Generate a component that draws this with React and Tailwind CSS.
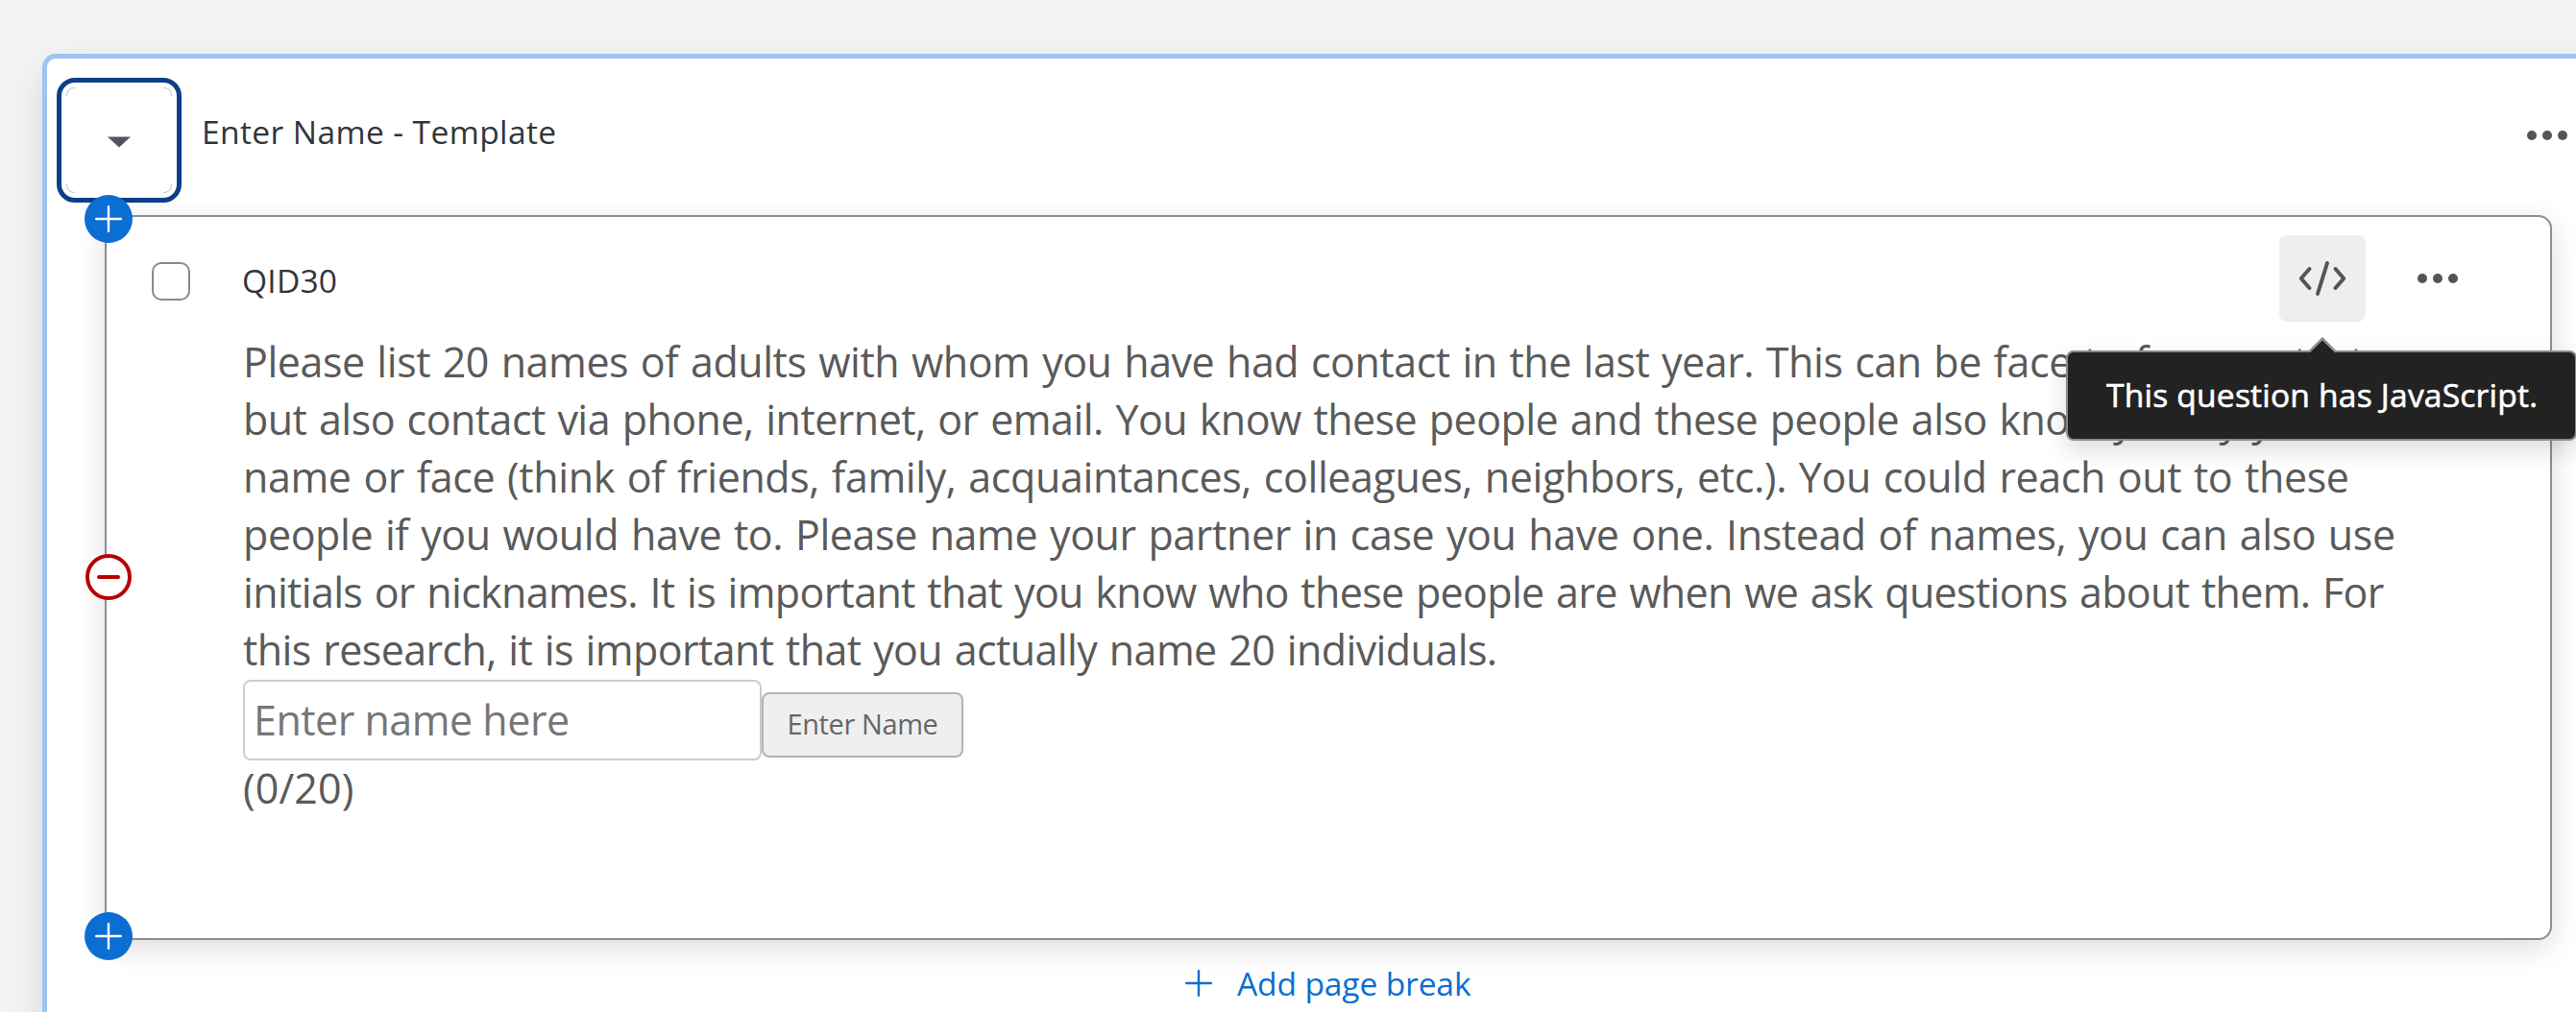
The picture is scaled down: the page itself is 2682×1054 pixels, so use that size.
const paragraph = [
  { text: "Please list 20 names of adults with whom you have had contact in the last year. This can be face to face contact", spacing: "tracking-[-0.46px]" },
  { text: "but also contact via phone, internet, or email. You know these people and these people also know you by your", spacing: "tracking-[-0.54px]" },
  { text: "name or face (think of friends, family, acquaintances, colleagues, neighbors, etc.). You could reach out to these", spacing: "tracking-[-0.4px]" },
  { text: "people if you would have to. Please name your partner in case you have one. Instead of names, you can also use", spacing: "tracking-[-0.41px]" },
  { text: "initials or nicknames. It is important that you know who these people are when we ask questions about them. For", spacing: "tracking-[-0.67px]" },
  { text: "this research, it is important that you actually name 20 individuals.", spacing: "tracking-[-0.6px]" },
];

function Dots() {
  return (
    <span className="flex gap-[6px]">
      <span className="size-[10px] rounded-full bg-[#50555b]" />
      <span className="size-[10px] rounded-full bg-[#50555b]" />
      <span className="size-[10px] rounded-full bg-[#50555b]" />
    </span>
  );
}

function PlusIcon() {
  return (
    <svg width="28" height="28" viewBox="0 0 28 28" fill="none" stroke="currentColor" strokeWidth="2.4" strokeLinecap="round">
      <path d="M14 1.2v25.6M1.2 14h25.6" />
    </svg>
  );
}

function AddButton({ className }) {
  return (
    <button className={`absolute left-[-23px] flex size-[50px] items-center justify-center rounded-full bg-[#0b6ed3] text-white ${className}`}>
      <PlusIcon />
    </button>
  );
}

function Tooltip() {
  return (
    <div className="absolute left-[-222px] top-[120px] z-10 flex h-[94px] w-[532px] items-center rounded-lg border-2 border-[#8a8a8a] bg-[#222] pl-[40px] shadow-[0_10px_24px_rgba(0,0,0,0.14)]">
      <svg className="absolute left-[250px] top-[-16px]" width="30" height="18" viewBox="0 0 30 18">
        <path d="M1 17 15 3 29 17V18H1Z" fill="#222" />
        <path d="M1 15.5 15 1.5 29 15.5" fill="none" stroke="#8a8a8a" strokeWidth="2.2" />
      </svg>
      <span className="mt-[-2px] whitespace-nowrap text-[33.6px] leading-[46px] tracking-[0.2px] text-white [-webkit-text-stroke:0.6px_white]">This question has JavaScript.</span>
    </div>
  );
}

function Question() {
  return (
    <section className="relative ml-[60px] h-[755px] w-[2548px] rounded-[14px] border-2 border-[#87909c] bg-white shadow-[0_8px_30px_rgba(0,0,0,0.14)]">
      <AddButton className="top-[-23px]" />
      <button className="absolute left-[-22px] top-[351px] flex size-[48px] items-center justify-center rounded-full border-4 border-[#b80000] bg-white">
        <span className="h-1 w-6 rounded-full bg-[#b80000]" />
      </button>
      <AddButton className="top-[724px]" />

      <div className="flex h-[120px] pl-[47px] pt-[19px]">
        <span className="mt-[28px] size-[40px] rounded-[10px] border-2 border-[#8a8a8a]" />
        <span className="ml-[54px] mt-[24px] text-[33.6px] leading-[46px] tracking-[0.2px] text-[#32363a]">QID30</span>
        <div className="ml-auto mr-[96px] flex">
          <div className="relative mr-[54px] flex size-[90px] items-center justify-center rounded-lg bg-[#eee]">
            <svg width="50" height="38" viewBox="0 0 50 38" fill="none" stroke="#50555b" strokeWidth="4" strokeLinecap="round" strokeLinejoin="round">
              <path d="M11.5 9 2.8 19l8.7 10M38.5 9l8.7 10-8.7 10M30 3l-10 32" />
            </svg>
            <Tooltip />
          </div>
          <div className="flex h-[90px] items-center">
            <Dots />
          </div>
        </div>
      </div>

      <div className="pl-[142px] pt-px text-[43px] leading-[60px] text-[#5a5a5a]">
        <p>
          {paragraph.map(({ text, spacing }) => (
            <span key={text} className={`block whitespace-nowrap [word-spacing:2px] ${spacing}`}>{text}</span>
          ))}
        </p>
        <div className="mt-px flex items-start">
          <input
            className="h-[84px] w-[540px] rounded-lg border-2 border-[#ccc] bg-white pb-[2px] pl-[9px] tracking-[-0.5px] placeholder:text-[#767676]"
            placeholder="Enter name here"
          />
          <button className="mt-[13px] h-[68px] w-[210px] rounded-lg border-2 border-[#b3b3b3] bg-[#efefef] pb-[2px] text-[29px] leading-[40px] tracking-[-0.4px] text-[#666]">
            Enter Name
          </button>
        </div>
        <p className="mt-[-1px] tracking-[0.1px]">(0/20)</p>
      </div>
    </section>
  );
}

export default function App() {
  return (
    <main className="h-[1054px] w-full overflow-hidden bg-[#f4f4f4] pl-[44px] pt-[56px] font-['Open_Sans',sans-serif]">
      <div className="h-[1100px] w-[2700px] rounded-tl-[14px] border-[5px] border-[#9dc5ef] bg-white shadow-[0_16px_40px_rgba(0,0,0,0.12)]">
        <header className="flex h-[163px] w-[2633px] items-start pl-[10px] pr-[9px] pt-[20px]">
          <button className="flex size-[130px] items-center justify-center rounded-[19px] border-[5px] border-[#0b3f87]">
            <svg width="120" height="120" viewBox="0 0 120 120" fill="none">
              <path d="M48 56.5h24L60 67.5Z" fill="#50555b" />
              <path d="M5.5 14q0-8.5 8.5-8.5M106 5.5q8.5 0 8.5 8.5M114.5 106q0 8.5-8.5 8.5M14 114.5q-8.5 0-8.5-8.5" stroke="#0b3f87" strokeOpacity="0.3" />
            </svg>
          </button>
          <h1 className="ml-[21px] mt-[33px] text-[33.6px] leading-[46px] tracking-[0.38px] text-[#32363a]">Enter Name - Template</h1>
          <div className="ml-auto mt-[55px]">
            <Dots />
          </div>
        </header>
        <Question />
        <button className="ml-[1185px] mt-[21px] flex items-center text-[#0b6ed3]">
          <PlusIcon />
          <span className="ml-[26px] mt-px text-[33.6px] leading-[46px] tracking-[-0.15px]">Add page break</span>
        </button>
      </div>
    </main>
  );
}
